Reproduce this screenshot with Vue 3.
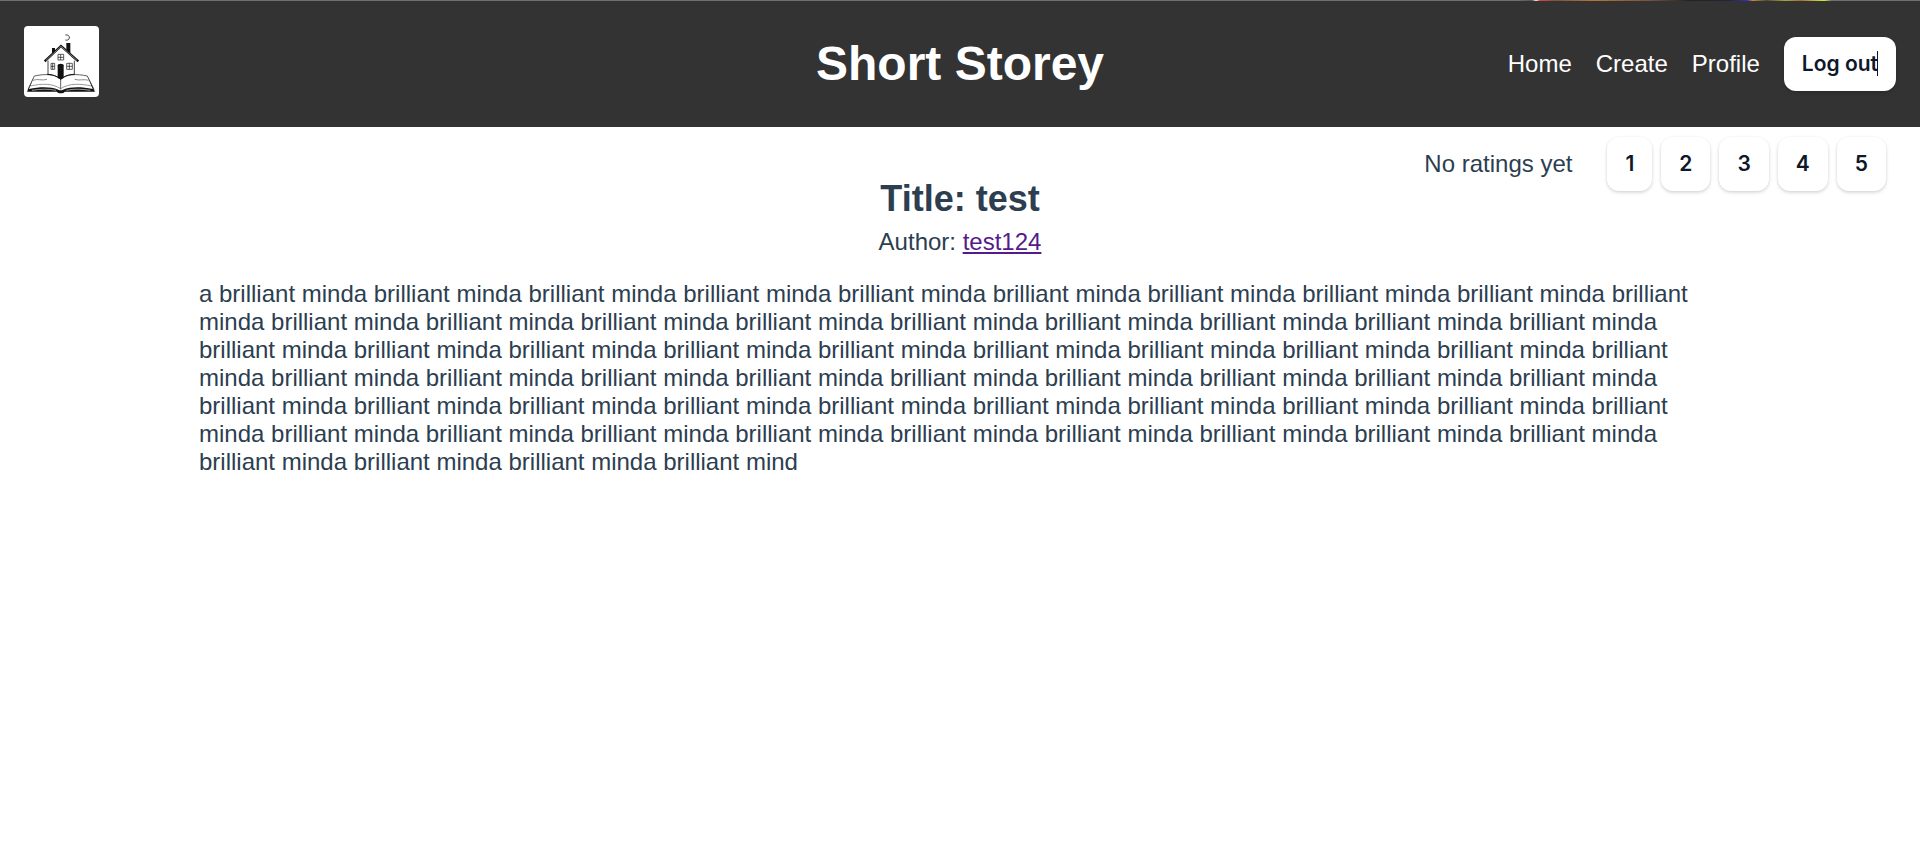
<script setup>
const links = ['Home', 'Create', 'Profile']
const scores = [1, 2, 3, 4, 5]
const story = 'a brilliant mind'.repeat(61)
</script>

<template>
  <div class="page">
    <div class="strip"></div>
    <header class="header">
      <a class="logo" href="#" aria-label="Short Storey home">
        <svg viewBox="0 0 225 213" fill="none" stroke="#111" stroke-width="3" aria-hidden="true">
          <path d="M124 27c9-2 13 4 12 9s-6 8-12 6" stroke="#444" />
          <path d="M127 51h12v32l-12-9zM84 66h9v11l-9 8z" fill="#111" stroke="none" />
          <path d="M72 104v42M151 104v43" stroke="#444" />
          <path d="M62 106l49-46 52 46" stroke="#111" stroke-width="7" />
          <path d="M66 103l45-42 48 42" stroke="#aaa" stroke-width="2" />
          <path d="M102 85h17v17h-17zM110 85v17M102 94h17M81 112h11v18H81zM86 112v18M81 121h11M128 112h17v18h-17zM136 112v18M128 121h17" stroke-width="2" />
          <path d="M101 156v-38q0-5 9-5t9 5v38l-9 4z" fill="#111" stroke="none" />
          <path d="M31 150c31-7 63-6 79 10 16-16 49-17 80-10M110 160v30M31 150L12 190M190 150l20 40" stroke-width="2" />
          <path d="M70 145c15 0 29 5 40 15 11-10 25-15 40-15" stroke-width="3" />
          <path d="M27 163c14-6 27 2 42-3M194 163c-14-5-27 2-42-3" stroke="#555" stroke-width="2" />
          <path d="M18 180c34-7 66-9 92 8 26-17 58-15 93-8" stroke="#666" stroke-width="2" />
          <path d="M31 150L9 197h90c3 6 20 6 23 0h91l-23-47 16 39c-35-7-66-7-89 2q-7 4-14 0c-23-9-54-9-88-2z" fill="#111" stroke="none" />
          <path d="M24 193c27-4 49-5 72 0M199 193c-27-4-49-5-72 0" stroke="#ddd" stroke-width="2" />
        </svg>
      </a>
      <h1 class="brand">Short Storey</h1>
      <nav class="nav">
        <a v-for="link in links" :key="link" class="nav-link" href="#">{{ link }}</a>
        <button type="button" class="button"><span class="caret">Log out</span></button>
      </nav>
    </header>

    <main>
      <section class="intro">
        <div class="heading">
          <h2 class="title">Title: test</h2>
          <p class="author">Author: <a href="#">test124</a></p>
        </div>
        <div class="ratings">
          <span class="summary">No ratings yet</span>
          <div class="scores">
            <button v-for="score in scores" :key="score" type="button" class="button">{{ score }}</button>
          </div>
        </div>
      </section>
      <p class="story">{{ story }}</p>
    </main>
  </div>
</template>

<style>
body {
  margin: 0;
  background: #fff;
}
</style>

<style scoped>
.page {
  color: #2c3e50;
  font-family: "Liberation Sans", Arial, sans-serif;
  font-size: 24px;
  line-height: 28px;
}

.strip {
  height: 1px;
  background: linear-gradient(90deg, #707070 79%, #555 79.8%, #eee 80%, #d44 80.2%, #75583f 81%, #b87536 83%, #76523c 86%, #222 88%, #24243c 90%, #33b 91%, #c83 91.3%, #554b35 92%, #aaa23b 93%, #a86d30 93.8%, #ce4 95%, #707070 95.4%);
}

.header {
  display: grid;
  grid-template-columns: 1fr auto 1fr;
  align-items: center;
  box-sizing: border-box;
  min-height: 126px;
  padding: 0 24px;
  background: #333;
  color: #fff;
}

.logo {
  display: block;
  width: 75px;
  height: 71px;
  margin-bottom: 6px;
  overflow: hidden;
  border-radius: 4px;
  background: #fff;
}

.logo svg {
  display: block;
  width: 100%;
  height: 100%;
}

.brand {
  margin: 0;
  font-size: 48px;
  line-height: 56px;
}

.nav {
  display: flex;
  justify-content: flex-end;
  align-items: center;
  gap: 24px;
}

.nav-link {
  color: #fff;
  text-decoration: none;
}

.button {
  box-sizing: border-box;
  min-height: 54px;
  padding: 0 17px;
  border: 1px solid transparent;
  border-radius: 12px;
  background: #fff;
  background-clip: border-box;
  box-shadow: 0 1px 3px rgba(0, 0, 0, 0.12), 0 2px 4px rgba(0, 0, 0, 0.08);
  color: #0f172a;
  font-family: Inter, sans-serif;
  font-size: 21px;
  font-weight: 600;
  line-height: 26px;
  cursor: pointer;
}

.caret {
  position: relative;
}

.caret::after {
  content: "";
  position: absolute;
  top: 0;
  right: 0;
  width: 1px;
  height: 100%;
  background: #0f172a;
}

.intro {
  display: grid;
  grid-template-columns: 1fr auto 1fr;
  align-items: start;
}

.heading {
  grid-column: 2;
  padding-top: 51px;
  text-align: center;
}

.title {
  margin: 0;
  font-size: 36px;
  line-height: 42px;
}

.author {
  margin: 8px 0 0;
}

.author a {
  color: #551a8b;
}

.ratings {
  display: flex;
  justify-content: flex-end;
  align-items: center;
  gap: 35px;
  padding: 10px 34px 0 0;
}

.scores {
  display: flex;
  gap: 9px;
}

.story {
  margin: 24px 199px;
}
</style>
